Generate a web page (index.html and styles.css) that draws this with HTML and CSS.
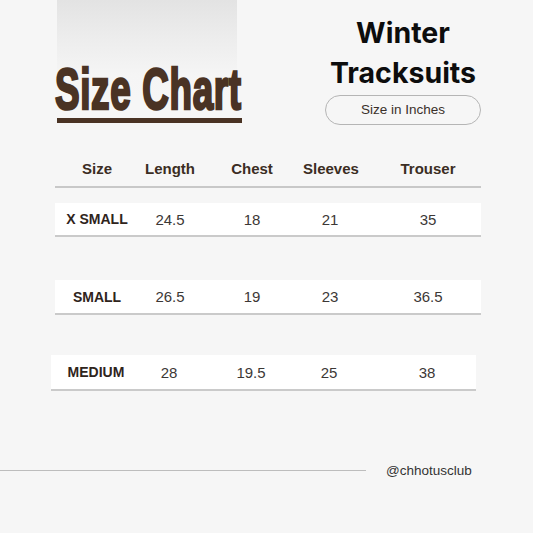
FILE: index.html
```html
<!DOCTYPE html>
<html>
<head>
<meta charset="utf-8">
<link rel="stylesheet" href="styles.css">
</head>
<body>
<div class="page">
  <header class="top">
    <div class="brand">
      <h1 class="brand-title"><span>Size Chart</span></h1>
      <div class="brand-bar"></div>
    </div>
    <div class="title">
      <h2 class="title-text">Winter<br>Tracksuits</h2>
      <div class="pill">Size in Inches</div>
    </div>
  </header>

  <section class="table">
    <div class="row head">
      <div class="cell">Size</div>
      <div class="cell">Length</div>
      <div class="cell">Chest</div>
      <div class="cell">Sleeves</div>
      <div class="cell last">Trouser</div>
    </div>
    <div class="row data r1">
      <div class="cell label">X SMALL</div>
      <div class="cell">24.5</div>
      <div class="cell">18</div>
      <div class="cell">21</div>
      <div class="cell last">35</div>
    </div>
    <div class="row data r2">
      <div class="cell label">SMALL</div>
      <div class="cell">26.5</div>
      <div class="cell">19</div>
      <div class="cell">23</div>
      <div class="cell last">36.5</div>
    </div>
    <div class="row data r3">
      <div class="cell label">MEDIUM</div>
      <div class="cell">28</div>
      <div class="cell">19.5</div>
      <div class="cell">25</div>
      <div class="cell last">38</div>
    </div>
  </section>

  <footer class="foot">
    <span class="foot-line"></span>
    <span class="handle">@chhotusclub</span>
  </footer>
</div>
</body>
</html>
```

FILE: styles.css
```css
* { box-sizing: border-box; }
html, body { margin: 0; padding: 0; }
body {
  background: #f6f6f6;
  font-family: "Liberation Sans", Arial, sans-serif;
  width: 533px;
  height: 533px;
  overflow: hidden;
}
.page { width: 533px; }

.top {
  display: flex;
  align-items: flex-start;
}
.brand {
  margin-left: 57px;
  width: 180px;
  padding-top: 60px;
  background: linear-gradient(to bottom, #e3e3e3 0px, #ededed 40px, #f5f5f5 75px, #f6f6f6 100px);
}
.brand-title {
  margin: 0 0 0 -2px;
  height: 58px;
  line-height: 58px;
  font-size: 58px;
  font-weight: 700;
  color: #4a3324;
  white-space: nowrap;
}
.brand-title span {
  display: inline-block;
  transform: scaleX(0.636);
  transform-origin: left center;
  -webkit-text-stroke: 2.6px #4a3324;
  letter-spacing: 1px;
}
.brand-bar {
  width: 185px;
  height: 5px;
  background: #4a3324;
}

.title {
  margin-left: 88px;
  width: 156px;
  padding-top: 13px;
  text-align: center;
}
.title-text {
  margin: 0;
  font-family: Inter, "Liberation Sans", sans-serif;
  font-size: 28.5px;
  line-height: 40px;
  font-weight: 700;
  color: #0d0d0d;
  white-space: nowrap;
}
.pill {
  margin-top: 2px;
  height: 30px;
  border: 1px solid #b5b5b5;
  border-radius: 15px;
  font-size: 13.5px;
  line-height: 28px;
  color: #3a302a;
}

.table {
  display: flex;
  flex-direction: column;
  margin-top: 25px;
}
.row {
  display: grid;
  grid-template-columns: 84px 62px 102px 54px 124px;
  align-items: center;
  margin-left: 55px;
  width: 426px;
}
.cell { text-align: center; white-space: nowrap; }
.cell.last { padding-left: 18px; }

.head {
  height: 38px;
  border-bottom: 2px solid #c8c8c8;
  font-size: 15px;
  font-weight: 700;
  color: #3b2d23;
}
.data {
  background: #ffffff;
  border-bottom: 2px solid #cacaca;
  font-size: 15px;
  color: #3c3836;
}
.label {
  font-size: 14px;
  font-weight: 700;
  color: #2f241c;
}
.r1 { margin-top: 15px; height: 34px; }
.r2 { margin-top: 43px; height: 35px; }
.r3 { margin-top: 40px; height: 36px; margin-left: 51px; width: 425px; padding-left: 3px; }

.foot {
  display: flex;
  align-items: center;
  margin-top: 69px;
  height: 20px;
}
.foot-line {
  width: 366px;
  height: 1px;
  background: #bdbdbd;
}
.handle {
  margin-left: 20px;
  font-size: 13.5px;
  color: #333333;
}
```
